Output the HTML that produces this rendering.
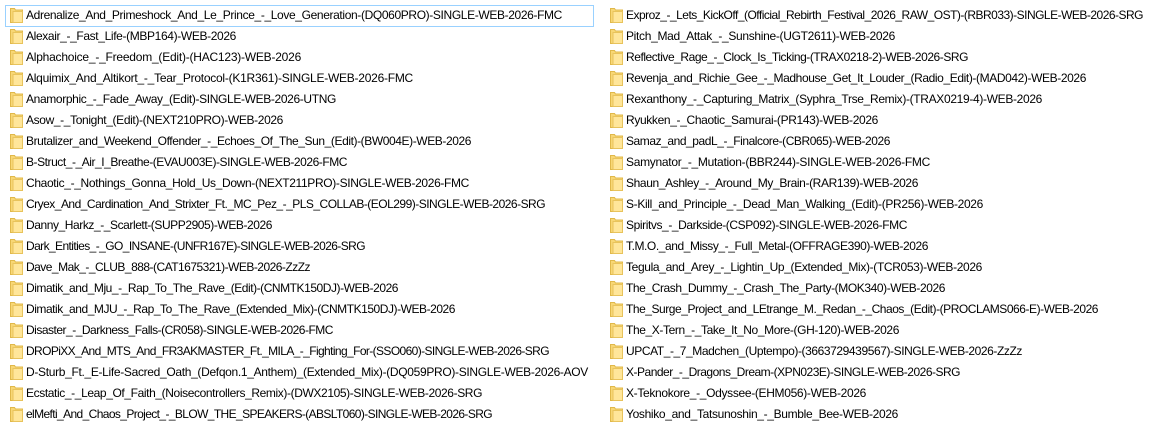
<!DOCTYPE html>
<html><head><meta charset="utf-8"><style>
body{margin:0;width:1171px;height:435px;background:#fff;overflow:hidden;font-family:"Liberation Sans",sans-serif;font-size:12px;color:#000}
.col{position:absolute;top:5px}
.r{position:relative;height:21px;line-height:21px;white-space:nowrap;padding-left:21px}
.r svg{position:absolute;left:5px;top:3px}
.r span{display:inline-block}
.sel{position:absolute;left:5px;top:5px;width:587px;height:20px;border:1px solid #99d1ff}
</style></head><body>
<div class="sel"></div>
<div class="col" style="left:5px" id="a"></div>
<div class="col" style="left:605px" id="b"></div>
<script>
var A=["Adrenalize_And_Primeshock_And_Le_Prince_-_Love_Generation-(DQ060PRO)-SINGLE-WEB-2026-FMC","Alexair_-_Fast_Life-(MBP164)-WEB-2026","Alphachoice_-_Freedom_(Edit)-(HAC123)-WEB-2026","Alquimix_And_Altikort_-_Tear_Protocol-(K1R361)-SINGLE-WEB-2026-FMC","Anamorphic_-_Fade_Away_(Edit)-SINGLE-WEB-2026-UTNG","Asow_-_Tonight_(Edit)-(NEXT210PRO)-WEB-2026","Brutalizer_and_Weekend_Offender_-_Echoes_Of_The_Sun_(Edit)-(BW004E)-WEB-2026","B-Struct_-_Air_I_Breathe-(EVAU003E)-SINGLE-WEB-2026-FMC","Chaotic_-_Nothings_Gonna_Hold_Us_Down-(NEXT211PRO)-SINGLE-WEB-2026-FMC","Cryex_And_Cardination_And_Strixter_Ft._MC_Pez_-_PLS_COLLAB-(EOL299)-SINGLE-WEB-2026-SRG","Danny_Harkz_-_Scarlett-(SUPP2905)-WEB-2026","Dark_Entities_-_GO_INSANE-(UNFR167E)-SINGLE-WEB-2026-SRG","Dave_Mak_-_CLUB_888-(CAT1675321)-WEB-2026-ZzZz","Dimatik_and_Mju_-_Rap_To_The_Rave_(Edit)-(CNMTK150DJ)-WEB-2026","Dimatik_and_MJU_-_Rap_To_The_Rave_(Extended_Mix)-(CNMTK150DJ)-WEB-2026","Disaster_-_Darkness_Falls-(CR058)-SINGLE-WEB-2026-FMC","DROPiXX_And_MTS_And_FR3AKMASTER_Ft._MILA_-_Fighting_For-(SSO060)-SINGLE-WEB-2026-SRG","D-Sturb_Ft._E-Life-Sacred_Oath_(Defqon.1_Anthem)_(Extended_Mix)-(DQ059PRO)-SINGLE-WEB-2026-AOV","Ecstatic_-_Leap_Of_Faith_(Noisecontrollers_Remix)-(DWX2105)-SINGLE-WEB-2026-SRG","elMefti_And_Chaos_Project_-_BLOW_THE_SPEAKERS-(ABSLT060)-SINGLE-WEB-2026-SRG"];
var B=["Exproz_-_Lets_KickOff_(Official_Rebirth_Festival_2026_RAW_OST)-(RBR033)-SINGLE-WEB-2026-SRG","Pitch_Mad_Attak_-_Sunshine-(UGT2611)-WEB-2026","Reflective_Rage_-_Clock_Is_Ticking-(TRAX0218-2)-WEB-2026-SRG","Revenja_and_Richie_Gee_-_Madhouse_Get_It_Louder_(Radio_Edit)-(MAD042)-WEB-2026","Rexanthony_-_Capturing_Matrix_(Syphra_Trse_Remix)-(TRAX0219-4)-WEB-2026","Ryukken_-_Chaotic_Samurai-(PR143)-WEB-2026","Samaz_and_padL_-_Finalcore-(CBR065)-WEB-2026","Samynator_-_Mutation-(BBR244)-SINGLE-WEB-2026-FMC","Shaun_Ashley_-_Around_My_Brain-(RAR139)-WEB-2026","S-Kill_and_Principle_-_Dead_Man_Walking_(Edit)-(PR256)-WEB-2026","Spiritvs_-_Darkside-(CSP092)-SINGLE-WEB-2026-FMC","T.M.O._and_Missy_-_Full_Metal-(OFFRAGE390)-WEB-2026","Tegula_and_Arey_-_Lightin_Up_(Extended_Mix)-(TCR053)-WEB-2026","The_Crash_Dummy_-_Crash_The_Party-(MOK340)-WEB-2026","The_Surge_Project_and_LEtrange_M._Redan_-_Chaos_(Edit)-(PROCLAMS066-E)-WEB-2026","The_X-Tern_-_Take_It_No_More-(GH-120)-WEB-2026","UPCAT_-_7_Madchen_(Uptempo)-(3663729439567)-SINGLE-WEB-2026-ZzZz","X-Pander_-_Dragons_Dream-(XPN023E)-SINGLE-WEB-2026-SRG","X-Teknokore_-_Odyssee-(EHM056)-WEB-2026","Yoshiko_and_Tatsunoshin_-_Bumble_Bee-WEB-2026"];
var EA=[562,236,301,413,336,283,471,347,469,545,272,365,310,398,455,333,549,588,482,492];
var EB=[1143,895,968,1086,1042,878,890,930,918,983,907,928,982,945,1098,899,1022,960,866,898];
var ic='<svg width="13" height="15" viewBox="0 0 13 15"><path d="M0.5 0.5h4l1 1.5h7v12.5h-12z" fill="#f8d775" stroke="#e0b84a"/><path d="M3 3.5h9.5v11h-9.5z" fill="#ffe69a" stroke="#e8c35c"/></svg>';
function f(id,L,E,start){
 var c=document.getElementById(id);
 c.innerHTML=L.map(function(t){return '<div class="r">'+ic+'<span>'+t+'</span></div>'}).join('');
 var sp=c.getElementsByTagName('span');
 for(var i=0;i<sp.length;i++){
  var w=sp[i].getBoundingClientRect().width, n=L[i].length;
  var ls=((E[i]-start)-w)/n;
  sp[i].style.letterSpacing=ls.toFixed(3)+'px';
 }
}
f('a',A,EA,26);f('b',B,EB,626);
</script>
</body></html>
